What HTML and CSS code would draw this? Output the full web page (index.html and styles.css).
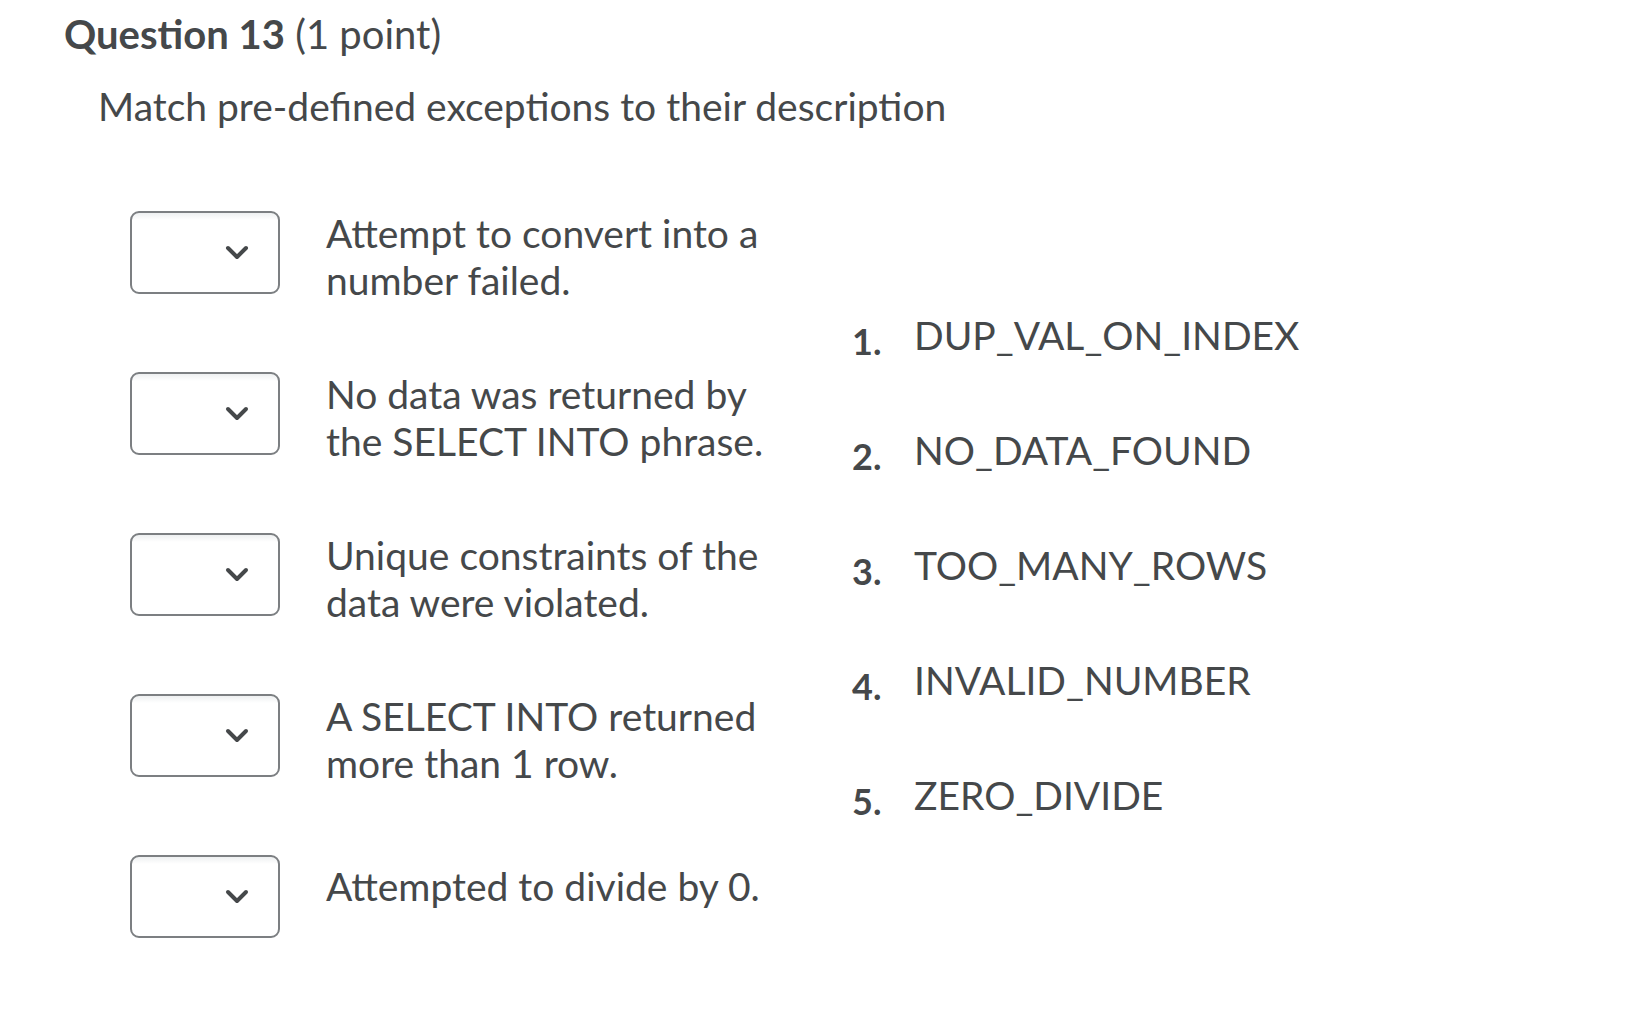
FILE: index.html
```html
<!DOCTYPE html>
<html lang="en">
<head>
  <meta charset="UTF-8">
  <title>Question 13</title>
  <link rel="stylesheet" href="styles.css">
</head>
<body>
  <div class="question">
    <h2 class="question-title"><strong>Question 13</strong> (1 point)</h2>
    <p class="prompt">Match pre-defined exceptions to their description</p>

    <div class="matching">
      <div class="choices">
        <div class="choice">
          <div class="select">
            <svg width="24" height="16" viewBox="0 0 24 16"><polyline points="3,3 12,12 21,3" /></svg>
          </div>
          <p class="choice-text">Attempt to convert into a number failed.</p>
        </div>
        <div class="choice">
          <div class="select">
            <svg width="24" height="16" viewBox="0 0 24 16"><polyline points="3,3 12,12 21,3" /></svg>
          </div>
          <p class="choice-text">No data was returned by the SELECT INTO phrase.</p>
        </div>
        <div class="choice">
          <div class="select">
            <svg width="24" height="16" viewBox="0 0 24 16"><polyline points="3,3 12,12 21,3" /></svg>
          </div>
          <p class="choice-text">Unique constraints of the data were violated.</p>
        </div>
        <div class="choice">
          <div class="select">
            <svg width="24" height="16" viewBox="0 0 24 16"><polyline points="3,3 12,12 21,3" /></svg>
          </div>
          <p class="choice-text">A SELECT INTO returned more than 1 row.</p>
        </div>
        <div class="choice single">
          <div class="select">
            <svg width="24" height="16" viewBox="0 0 24 16"><polyline points="3,3 12,12 21,3" /></svg>
          </div>
          <p class="choice-text">Attempted to divide by 0.</p>
        </div>
      </div>

      <ol class="answers">
        <li><span class="num">1.</span>DUP_VAL_ON_INDEX</li>
        <li><span class="num">2.</span>NO_DATA_FOUND</li>
        <li><span class="num">3.</span>TOO_MANY_ROWS</li>
        <li><span class="num">4.</span>INVALID_NUMBER</li>
        <li><span class="num">5.</span>ZERO_DIVIDE</li>
      </ol>
    </div>
  </div>
</body>
</html>
```

FILE: styles.css
```css
* {
  margin: 0;
  padding: 0;
  box-sizing: border-box;
}

body {
  font-family: Lato, "Noto Sans", sans-serif;
  color: #45484a;
  background-color: #fff;
}

.question {
  padding: 10px 0 0 64px;
}

.question-title {
  font-size: 40px;
  font-weight: 400;
  line-height: 48px;
}

.question-title strong {
  font-weight: 700;
}

.prompt {
  font-size: 39px;
  line-height: 48px;
  margin: 24px 0 0 34px;
}

/* Colonne de gauche : listes déroulantes + descriptions */
.matching {
  display: flex;
  margin-top: 80px;
  padding-left: 66px;
}

.choices {
  display: flex;
  flex-direction: column;
  gap: 67px;
}

.choice {
  display: flex;
  align-items: flex-start;
  gap: 46px;
}

.choice.single .choice-text {
  margin-top: 9px;
}

.select {
  width: 150px;
  height: 83px;
  margin-top: 1px;
  flex-shrink: 0;
  display: flex;
  align-items: center;
  justify-content: flex-end;
  padding-right: 29px;
  border: 2px solid #7c7f82;
  border-radius: 9px;
  background: linear-gradient(#eef0f1, #fff 7px);
}

.select svg polyline {
  fill: none;
  stroke: #45484a;
  stroke-width: 4;
  stroke-linecap: round;
  stroke-linejoin: round;
}

.choice-text {
  width: 448px;
  font-size: 39px;
  line-height: 47px;
}

/* Colonne de droite : réponses numérotées */
.answers {
  list-style: none;
  margin: 101px 0 0 76px;
  display: flex;
  flex-direction: column;
  gap: 66px;
}

.answers li {
  display: flex;
  align-items: baseline;
  font-size: 39px;
  line-height: 48px;
}

.answers .num {
  width: 64px;
  padding-left: 2px;
  font-size: 36px;
  font-weight: 700;
  position: relative;
  top: 5px;
}
```
